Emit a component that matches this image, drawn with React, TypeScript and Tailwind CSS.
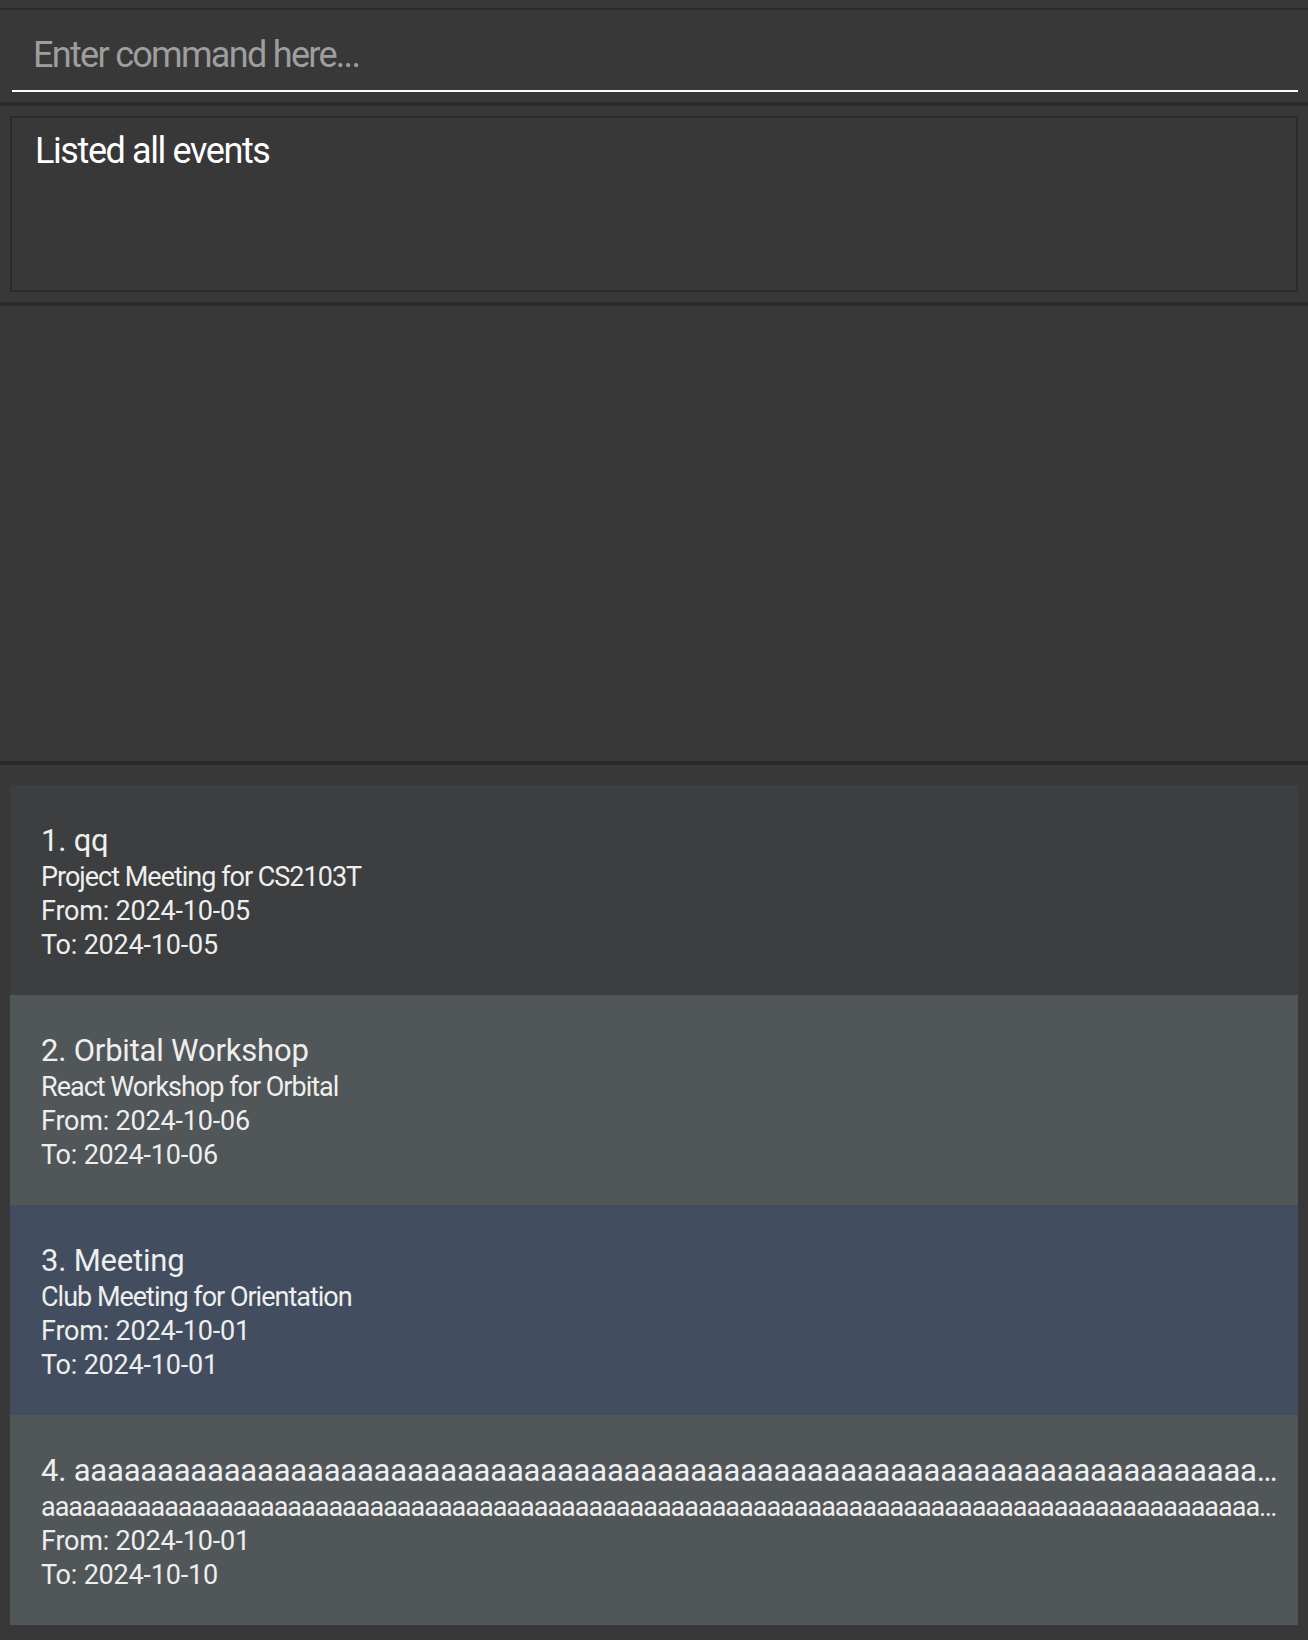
const events = [
  { id: 1, name: "qq", desc: "Project Meeting for CS2103T", from: "2024-10-05", to: "2024-10-05", bg: "bg-[#3c3e3f]" },
  { id: 2, name: "Orbital Workshop", desc: "React Workshop for Orbital", from: "2024-10-06", to: "2024-10-06", bg: "bg-[#515658]" },
  { id: 3, name: "Meeting", desc: "Club Meeting for Orientation", from: "2024-10-01", to: "2024-10-01", bg: "bg-[#424d5f]" },
  {
    id: 4,
    name: "a".repeat(120),
    desc: "a".repeat(160),
    from: "2024-10-01",
    to: "2024-10-10",
    bg: "bg-[#515658]",
  },
];

const EventCard = ({ ev }: { ev: (typeof events)[number] }) => (
  <div className={`h-[210px] pl-[31px] pr-[8px] pt-[37px] text-[#eeeeee] ${ev.bg}`}>
    <p className="truncate text-[31px] leading-[38px] tracking-[-0.2px]">
      {ev.id}. {ev.name}
    </p>
    <p className="truncate text-[27px] leading-[34px] tracking-[-1px]">{ev.desc}</p>
    <p className="text-[27px] leading-[34px] tracking-[-0.2px]">From: {ev.from}</p>
    <p className="text-[27px] leading-[34px] tracking-[-0.2px]">To: {ev.to}</p>
  </div>
);

export default function App() {
  return (
    <div
      className="flex h-[1640px] w-full flex-col bg-[#383838]"
      style={{ fontFamily: "Roboto, 'Noto Sans', sans-serif" }}
    >
      <div className="h-[8px]" />
      <div className="h-[2px] bg-[#2a2a2a]" />

      {/* command box */}
      <div className="h-[92px] pl-[12px] pr-[10px]">
        <input
          className="h-[82px] w-full border-b-2 border-white bg-transparent pl-[21px] pt-[9px] text-[36px] tracking-[-1.7px] text-white outline-none placeholder:text-[#9e9e9e]"
          placeholder="Enter command here..."
        />
      </div>
      <div className="h-[4px] bg-[#2a2a2a]" />

      {/* result display */}
      <div className="h-[196px] px-[10px] pt-[10px]">
        <div className="h-[176px] border-2 border-[#2b2b2b] pl-[23px] pt-[11px]">
          <p className="text-[36px] leading-[44px] tracking-[-1.4px] text-white">Listed all events</p>
        </div>
      </div>
      <div className="h-[4px] bg-[#2a2a2a]" />

      <div className="h-[455px]" />
      <div className="h-[4px] bg-[#2a2a2a]" />

      {/* event list */}
      <div className="px-[10px] pt-[20px]">
        {events.map((ev) => (
          <EventCard key={ev.id} ev={ev} />
        ))}
      </div>
    </div>
  );
}
